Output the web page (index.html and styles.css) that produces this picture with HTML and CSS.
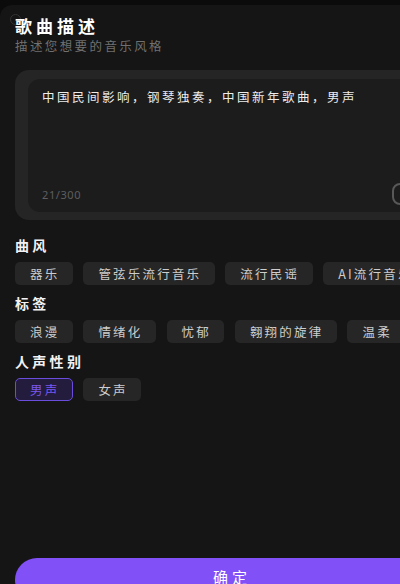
FILE: index.html
```html
<!DOCTYPE html>
<html lang="zh-CN">
<head>
<meta charset="utf-8">
<link rel="stylesheet" href="styles.css">
</head>
<body>
<div class="sheet">
  <span class="ghost-icon"></span>
  <h1 class="title">歌曲描述</h1>
  <p class="subtitle">描述您想要的音乐风格</p>
  <div class="input-outer">
    <div class="input-inner">
      <p class="input-text">中国民间影响，钢琴独奏，中国新年歌曲，男声</p>
      <div class="input-foot">
        <span class="counter">21/300</span>
        <span class="dice"><span class="dice-dot"></span></span>
      </div>
    </div>
  </div>
  <h2 class="label">曲风</h2>
  <div class="chips">
    <span class="chip">器乐</span>
    <span class="chip">管弦乐流行音乐</span>
    <span class="chip">流行民谣</span>
    <span class="chip">AI流行音乐</span>
  </div>
  <h2 class="label">标签</h2>
  <div class="chips">
    <span class="chip">浪漫</span>
    <span class="chip">情绪化</span>
    <span class="chip">忧郁</span>
    <span class="chip">翱翔的旋律</span>
    <span class="chip">温柔</span>
  </div>
  <h2 class="label">人声性别</h2>
  <div class="chips">
    <span class="chip chip-active">男声</span>
    <span class="chip">女声</span>
  </div>
  <button class="confirm">确定</button>
</div>
</body>
</html>
```
FILE: styles.css
```css
* { box-sizing: border-box; }
html, body {
  margin: 0;
  padding: 0;
  background: #0b0b0b;
  overflow: hidden;
  height: 584px;
}
body {
  font-family: "Noto Sans CJK SC", "Noto Sans", sans-serif;
  color: #fff;
}
.sheet {
  position: relative;
  width: 460px;
  margin-top: 5px;
  padding: 10px 15px 0;
  background: #151515;
  border-radius: 12px 12px 0 0;
  display: flex;
  flex-direction: column;
  height: 640px;
}
.ghost-icon {
  position: absolute;
  left: 10px;
  top: 9px;
  width: 11px;
  height: 11px;
  border: 1.5px solid #333;
  border-radius: 50%;
}
.title {
  position: relative;
  margin: 0;
  font-size: 17px;
  line-height: 22px;
  font-weight: 700;
  letter-spacing: 4px;
  color: #fff;
}
.subtitle {
  margin: 1px 0 0;
  font-size: 12.5px;
  line-height: 16px;
  letter-spacing: 2.4px;
  color: #707070;
}
.input-outer {
  margin-top: 16px;
  background: #252525;
  border-radius: 14px;
  padding: 9px 13px 8px;
}
.input-inner {
  height: 133px;
  background: #1c1c1d;
  border-radius: 12px;
  padding: 10px 18px 7px 14px;
  display: flex;
  flex-direction: column;
  justify-content: space-between;
}
.input-text {
  margin: 0;
  font-size: 12.5px;
  line-height: 16px;
  letter-spacing: 2.5px;
  color: #ececec;
}
.input-foot {
  display: flex;
  align-items: center;
  justify-content: space-between;
  height: 22px;
}
.counter {
  font-family: "Noto Sans", sans-serif;
  font-size: 11px;
  letter-spacing: 0.6px;
  color: #5e5e5e;
}
.dice {
  width: 22px;
  height: 22px;
  border: 2px solid #585858;
  border-radius: 8px;
  display: flex;
  align-items: center;
  justify-content: center;
}
.dice-dot {
  width: 6px;
  height: 8px;
  border-radius: 2px;
  background: #d8d8d8;
}
.label {
  margin: 16px 0 0;
  font-size: 14px;
  line-height: 18px;
  font-weight: 700;
  letter-spacing: 3.3px;
  color: #f2f2f2;
}
.chips + .label { margin-top: 9px; }
.chips {
  margin-top: 8px;
  display: flex;
  gap: 10.5px;
  white-space: nowrap;
}
.chip {
  flex: none;
  height: 23px;
  display: flex;
  align-items: center;
  padding: 0 13.5px 0 15px;
  background: #262626;
  border-radius: 5px;
  font-size: 12.5px;
  letter-spacing: 2.2px;
  color: #cdcdcd;
}
.chip-active {
  background: #231c3c;
  border: 1px solid #6a4ddc;
  padding: 0 12.5px 0 14px;
  color: #7a58f2;
}
.confirm {
  margin-top: 157px;
  width: 430px;
  height: 44px;
  flex: none;
  border: none;
  border-radius: 22px;
  background: #8150f7;
  color: #fff;
  font-family: "Noto Sans CJK SC", sans-serif;
  font-size: 15px;
  line-height: 21px;
  letter-spacing: 4px;
  padding: 8px 0 0 4px;
  display: flex;
  justify-content: center;
  align-items: flex-start;
}
```
